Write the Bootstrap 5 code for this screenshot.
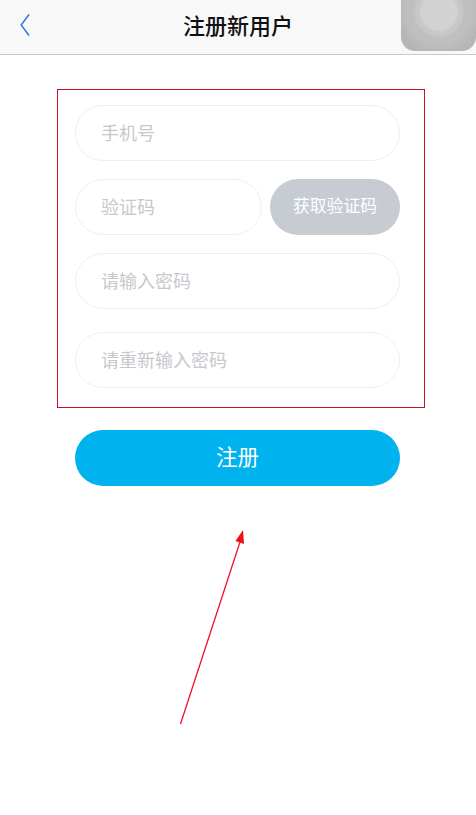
<!DOCTYPE html>
<html lang="zh-CN">
<head>
<meta charset="utf-8">
<title>注册新用户</title>
<link rel="stylesheet" href="https://cdn.jsdelivr.net/npm/bootstrap@5.3.0/dist/css/bootstrap.min.css">
<style>
html, body { height: 100%; }
body { font-family: "Liberation Sans", "Noto Sans CJK SC", sans-serif; background: #fff; overflow: hidden; position: relative; }
.top-bar { height: 55px; background: #f8f8f8; border-bottom: 1px solid #c9c9c9; position: relative; }
.top-title { font-size: 22px; font-weight: 500; color: #111; line-height: 1; margin: 0; }
.back-link { position: absolute; left: 20px; top: 14px; line-height: 0; }
.touch-btn { position: absolute; left: 401px; top: 0; width: 75px; height: 51px; border-radius: 0 0 14px 14px; background: radial-gradient(circle at 38px 12px, #d2d2d2 0 18px, #c8c8c8 20px 23px, #bfbfbf 26px 32px, #b6b6b6 42px); }
.form-frame { width: 368px; margin: 34px 0 0 57px; padding: 15px 24px 19px 17px; border: 1px solid #c8102e; }
.pill-field.form-control { height: 56px; border-radius: 28px; border: 1px solid #efeff1; padding: 2px 25px 0; font-size: 18px; color: #333; box-shadow: none; }
.pill-field.form-control::placeholder { color: #c8c8cc; opacity: 1; }
.form-gap { margin-bottom: 18px; }
.form-gap-wide { margin-bottom: 23px; }
.code-btn.btn { width: 130px; height: 56px; flex: none; border-radius: 28px; border: 0; background: #c6ccd2; color: #fff; font-size: 16.8px; padding: 0; opacity: 1; }
.submit-btn.btn { display: block; width: 325px; height: 56px; margin: 22px 0 0 75px; border-radius: 28px; border: 0; background: #00b2ee; color: #fff; font-size: 21.5px; padding: 0; }
.note-arrow { position: absolute; left: 0; top: 0; width: 476px; height: 815px; pointer-events: none; }
</style>
</head>
<body>
<header class="top-bar d-flex align-items-center justify-content-center">
  <a class="back-link" href="#" aria-label="返回">
    <svg width="11" height="22" viewBox="0 0 11 22" fill="none" stroke="#2a7fd6" stroke-width="1.5"><path d="M9 0.5 L1.2 11 L9 21.5"/></svg>
  </a>
  <h1 class="top-title">注册新用户</h1>
  <div class="touch-btn"></div>
</header>
<main>
  <form class="form-frame">
    <input class="form-control pill-field form-gap" type="text" placeholder="手机号">
    <div class="d-flex gap-2 form-gap">
      <input class="form-control pill-field" type="text" placeholder="验证码">
      <button class="btn code-btn" type="button">获取验证码</button>
    </div>
    <input class="form-control pill-field form-gap-wide" type="password" placeholder="请输入密码">
    <input class="form-control pill-field" type="password" placeholder="请重新输入密码">
  </form>
  <button class="btn submit-btn" type="button">注册</button>
</main>
<svg class="note-arrow" viewBox="0 0 476 815">
  <line x1="180.500" y1="724" x2="240" y2="542" stroke="#ee1525" stroke-width="1.3"/>
  <polygon points="243,530 244,544 235.500,541" fill="#f01010"/>
</svg>
<script src="https://cdn.jsdelivr.net/npm/bootstrap@5.3.0/dist/js/bootstrap.bundle.min.js"></script>
</body>
</html>
